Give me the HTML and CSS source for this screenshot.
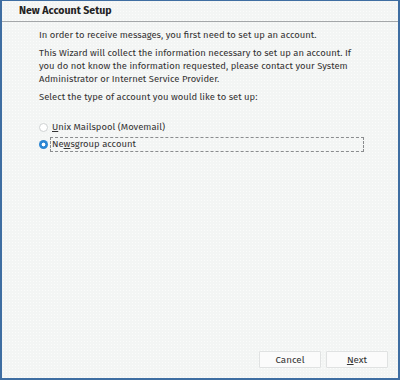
FILE: index.html
```html
<!DOCTYPE html>
<html lang="en">
<head>
    <meta charset="UTF-8">
    <title>New Account Setup</title>
    <link rel="stylesheet" href="styles.css">
</head>
<body>
    <div class="window">
        <div class="titlebar">New Account Setup</div>

        <div class="content">
            <p>In order to receive messages, you first need to set up an account.</p>
            <p>This Wizard will collect the information necessary to set up an account. If<br>you do not know the information requested, please contact your System<br>Administrator or Internet Service Provider.</p>
            <p>Select the type of account you would like to set up:</p>

            <div class="options">
                <label class="option">
                    <span class="radio"></span>
                    <span class="option-text"><u>U</u>nix Mailspool (Movemail)</span>
                </label>
                <label class="option focused">
                    <span class="radio checked"></span>
                    <span class="option-text">Ne<u>w</u>sgroup account</span>
                </label>
            </div>
        </div>

        <div class="buttons">
            <button class="btn">Cancel</button>
            <button class="btn"><u>N</u>ext</button>
        </div>
    </div>
</body>
</html>
```

FILE: styles.css
```css
* {
    margin: 0;
    padding: 0;
    box-sizing: border-box;
}

body {
    font-family: "Fira Sans", "Noto Sans", sans-serif;
    font-size: 9.45px;
    color: #333;
    background: #f3f5f4;
}

.window {
    width: 400px;
    height: 380px;
    display: flex;
    flex-direction: column;
    border: 2px solid #3f6ea2;
    border-top-width: 1px;
    background-color: #f3f5f4;
    background-image: radial-gradient(#fbfcfb 0.6px, transparent 0.8px);
    background-size: 3px 3px;
}

.titlebar {
    height: 21px;
    line-height: 20px;
    padding-left: 17px;
    font-weight: bold;
    font-size: 10.6px;
    color: #222;
    border-bottom: 1px solid #a4a7a9;
}

.content {
    flex: 1;
    padding: 7px 34px 0 37px;
    white-space: nowrap;
}

.content p {
    line-height: 13px;
    margin-bottom: 5px;
}

.options {
    margin-top: 16px;
    display: flex;
    flex-direction: column;
    gap: 2px;
}

.option {
    display: flex;
    align-items: center;
    gap: 2px;
    height: 15px;
}

.option-text {
    flex: 1;
    padding-left: 1px;
    line-height: 13px;
    border: 1px dashed transparent;
}

.focused .option-text {
    border-color: #8a8c8e;
}

.radio {
    width: 9px;
    height: 9px;
    border-radius: 50%;
    border: 1px solid #cfd2d3;
    background: #fff;
}

.radio.checked {
    border: none;
    background: radial-gradient(circle, #fff 0 1.6px, #2b86d3 2.2px);
}

.buttons {
    display: flex;
    justify-content: flex-end;
    gap: 5px;
    padding: 0 10px 10px 0;
}

.btn {
    width: 62px;
    height: 17px;
    font-family: inherit;
    font-size: 9.8px;
    color: #333;
    background: #fbfbfb;
    border: 1px solid #e0e2e2;
    border-radius: 1px;
}
```
